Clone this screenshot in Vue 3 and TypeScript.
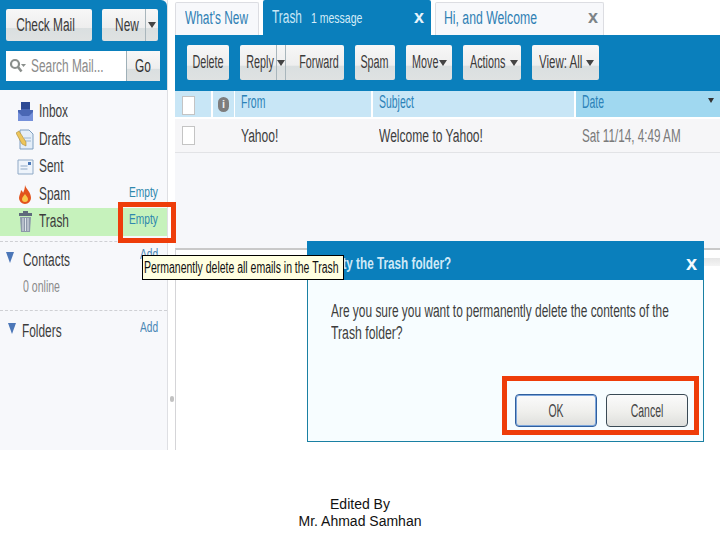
<script setup lang="ts">
interface Folder { name: string; action?: string; icon: string; active?: boolean }
const folders: Folder[] = [
  { name: 'Inbox', icon: 'inbox' },
  { name: 'Drafts', icon: 'drafts' },
  { name: 'Sent', icon: 'sent' },
  { name: 'Spam', icon: 'spam', action: 'Empty' },
  { name: 'Trash', icon: 'trash', action: 'Empty', active: true },
]
</script>

<template>
  <div class="page">
    <div class="shot">
      <aside class="side">
        <div class="side-top">
          <div class="row-btns">
            <div class="btn check"><span class="n c">Check Mail</span></div>
            <div class="btn new">
              <div class="new-l"><span class="n c">New</span></div>
              <div class="new-r"><i class="caret"></i></div>
            </div>
          </div>
          <div class="search">
            <svg class="glass" width="18" height="16" viewBox="0 0 18 16">
              <circle cx="6" cy="6" r="4" fill="none" stroke="#8a8f8c" stroke-width="2.2" />
              <path d="M9 9l3.500 4.500" stroke="#8a8f8c" stroke-width="2.6" />
              <path d="M12 6h5l-2.500 3z" fill="#8a8f8c" />
            </svg>
            <div class="search-text"><span class="n grey">Search Mail...</span></div>
            <div class="go"><span class="n c">Go</span></div>
          </div>
        </div>
        <nav class="nav">
          <div v-for="f in folders" :key="f.name" class="folder" :class="{ active: f.active }">
            <svg class="ficon" width="18" height="22" viewBox="0 0 18 22">
              <template v-if="f.icon === 'inbox'">
                <path d="M5 1h9v8h3v11H2V9h3z" fill="#4a67b4" />
                <path d="M5 1h9v7H5z" fill="#2d4a94" />
                <path d="M2 11l4 4h7l4-4v9H2z" fill="#7590da" />
              </template>
              <template v-else-if="f.icon === 'drafts'">
                <path d="M4 2h9l4 4v15H4z" fill="#e4eef8" stroke="#7f9fc0" />
                <path d="M8 10h7M9 13h6" stroke="#9db6d0" />
                <path d="M0 5l3-2 7 11 0 4-4-2z" fill="#eec65a" stroke="#a88a3a" stroke-width=".6" />
              </template>
              <template v-else-if="f.icon === 'sent'">
                <path d="M2 4h15v14H2z" fill="#eef4fb" stroke="#8fa9c6" />
                <path d="M12 6h3v3h-3z" fill="#4a78b8" />
                <path d="M4.500 10h7M4.500 13h7" stroke="#8fa9c6" />
              </template>
              <template v-else-if="f.icon === 'spam'">
                <path d="M9 2c1 4 6 7 6 13a6 6 0 0 1-12 0c0-3 2-5 2-8 1 1 2 2 2 3 1-2 2-5 2-8z" fill="#e2531c" />
                <path d="M9 11c1 2 3 3 3 5a3 3 0 0 1-6 0c0-2 2-3 3-5z" fill="#f8c64a" />
              </template>
              <template v-else>
                <path d="M7 0h5v2h4v3H3V2h4z" fill="#5f6a7c" />
                <path d="M4 6h11l-1 15H5z" fill="#8d99aa" />
                <path d="M7 7v13M9.500 7v13M12 7v13" stroke="#dfe4ea" />
              </template>
            </svg>
            <span class="n label">{{ f.name }}</span>
            <span v-if="f.action" class="n link">{{ f.action }}</span>
          </div>
        </nav>
        <section class="sec contacts">
          <div class="sec-head">
            <i class="tri"></i>
            <span class="n label">Contacts</span>
            <span class="n link add">Add</span>
          </div>
          <div class="online"><span class="n grey">0 online</span></div>
        </section>
        <section class="sec folders">
          <div class="sec-head">
            <i class="tri"></i>
            <span class="n label">Folders</span>
            <span class="n link add">Add</span>
          </div>
        </section>
      </aside>

      <div class="split"><i class="grip"></i></div>

      <main class="main">
        <div class="tabs">
          <div class="tab new-tab"><span class="n tab-t">What's New</span></div>
          <div class="tab on">
            <span class="n tab-t">Trash</span>
            <span class="n tab-s">1 message</span>
            <span class="x">x</span>
          </div>
          <div class="tab hi">
            <span class="n tab-t">Hi, and Welcome</span>
            <span class="x grey-x">x</span>
          </div>
        </div>
        <div class="toolbar">
          <div class="btn tb w-del"><span class="n c">Delete</span></div>
          <div class="btn tb w-reply">
            <div class="p-reply"><span class="n c">Reply</span></div>
            <div class="p-car"><i class="caret"></i></div>
            <div class="p-fwd"><span class="n c">Forward</span></div>
          </div>
          <div class="btn tb w-spam"><span class="n c">Spam</span></div>
          <div class="btn tb w-move"><span class="n c">Move</span><i class="caret abs"></i></div>
          <div class="btn tb w-act"><span class="n c">Actions</span><i class="caret abs"></i></div>
          <div class="btn tb w-view"><span class="n c">View: All</span><i class="caret abs"></i></div>
        </div>
        <div class="thead">
          <div class="th"><i class="cb head-cb"></i></div>
          <div class="th info-cell"><i class="info">i</i></div>
          <div class="th"><span class="n th-t">From</span></div>
          <div class="th"><span class="n th-t">Subject</span></div>
          <div class="th date-h"><span class="n th-t">Date</span><i class="caret small"></i></div>
        </div>
        <div class="trow">
          <div class="td"><i class="cb"></i></div>
          <div class="td"></div>
          <div class="td"><span class="n dark">Yahoo!</span></div>
          <div class="td"><span class="n dark">Welcome to Yahoo!</span></div>
          <div class="td"><span class="n greyd">Sat 11/14, 4:49 AM</span></div>
        </div>
        <div class="list-fill"></div>
        <div class="preview"><div class="preview-band"></div></div>
      </main>

      <div class="dialog">
        <div class="dlg-head">
          <span class="n dlg-title">Empty the Trash folder?</span>
          <span class="x">x</span>
        </div>
        <div class="dlg-body">
          <p class="dlg-line"><span class="n dark first">Are you sure you want to permanently delete the contents of the</span></p>
          <p class="dlg-line"><span class="n dark">Trash folder?</span></p>
        </div>
        <div class="dlg-actions">
          <div class="dbtn ok"><span class="n c">OK</span></div>
          <div class="dbtn"><span class="n c">Cancel</span></div>
        </div>
      </div>

      <div class="tooltip"><span class="n tip">Permanently delete all emails in the Trash</span></div>
      <div class="mark mark-empty"></div>
      <div class="mark mark-ok"></div>
    </div>
    <footer class="foot">
      <div>Edited By</div>
      <div>Mr. Ahmad Samhan</div>
    </footer>
  </div>
</template>

<style>
html, body { margin: 0; background: #fff; }
</style>

<style scoped>
.page { width: 720px; height: 540px; overflow: hidden; background: #fff; font-family: "Liberation Sans", Arial, sans-serif; color: #333; display: flex; flex-direction: column; }
.shot { position: relative; height: 450px; display: flex; flex: none; overflow: hidden; }

.n { display: inline-block; white-space: nowrap; font-size: 18px; line-height: 20px; transform: scaleX(.66); transform-origin: left center; flex: none; }
.n.c { transform-origin: center; }
.grey { color: #8b8b8b; }

.side { width: 167px; flex: none; background: #f7f8fb; border-right: 1px solid #dedfe3; display: flex; flex-direction: column; }
.side-top { height: 90px; box-sizing: border-box; background: #0a7fbc; padding: 9px 7px 9px 6px; border-top-right-radius: 6px; display: flex; flex-direction: column; gap: 10px; }
.row-btns { display: flex; gap: 10px; height: 32px; }
.btn { background: linear-gradient(#f7f7f7, #eeeeee 58%, #dadfe0 60%, #dfe2e2); border-radius: 2px; display: flex; align-items: center; justify-content: center; color: #3a3a3a; box-sizing: border-box; position: relative; }
.check { width: 86px; padding-right: 6px; }
.new { width: 56px; justify-content: flex-start; }
.new-l { width: 43px; display: flex; justify-content: center; padding-left: 7px; box-sizing: border-box; }
.new-r { width: 13px; height: 100%; border-left: 1px solid #a9b6bc; box-sizing: border-box; display: flex; align-items: center; justify-content: center; }
.caret { display: block; width: 0; height: 0; border-left: 4px solid transparent; border-right: 4px solid transparent; border-top: 6px solid #444; }
.caret.abs { position: absolute; right: 5px; top: 15px; }
.caret.small { position: absolute; right: 6px; top: 7px; border-width: 5px 3px 0; border-top-color: #333; }
.search { height: 30px; background: #fff; display: flex; align-items: center; }
.glass { margin-left: 3px; flex: none; }
.search-text { width: 99px; padding-left: 4px; box-sizing: border-box; flex: none; }
.go { flex: 1; height: 100%; display: flex; align-items: center; justify-content: center; border-left: 1px solid #9fb0b8; background: linear-gradient(#f7f7f7, #eeeeee 58%, #dadfe0 60%, #dfe2e2); color: #333; }

.nav { padding-top: 8px; }
.folder { height: 27.5px; display: flex; align-items: center; position: relative; padding-left: 16px; }
.folder.active { background: #c6f2bc; }
.folder .label { margin-top: -1px; }
.ficon { flex: none; margin-right: 5px; }
.label { color: #3c3c3c; }
.link { font-size: 15px; color: #2f88ad; position: absolute; left: 129px; top: 1px; transform: scaleX(.68); }
.sec { box-sizing: border-box; }
.contacts { margin-top: 5px; border-top: 1px dashed #cfd0d4; border-bottom: 1px dashed #cfd0d4; padding: 8px 0 0 6px; position: relative; height: 70px; }
.sec-head { display: flex; align-items: center; height: 20px; position: relative; }
.tri { display: block; width: 0; height: 0; border-left: 4px solid transparent; border-right: 4px solid transparent; border-top: 11px solid #4c77b8; margin-right: 9px; flex: none; margin-top: -4px; }
.add { left: 134px; top: -6px; color: #4a87b5; }
.online { padding: 7px 0 0 17px; }
.online .n { font-size: 16px; }
.folders { padding: 10px 0 0 8px; }
.folders .tri { margin-right: 6px; }
.folders .add { left: 132px; top: -4px; }

.split { width: 7px; flex: none; position: relative; }
.grip { position: absolute; left: 2px; top: 396px; width: 4px; height: 6px; border-radius: 2px; background: #c2c2c2; }

.main { flex: 1; min-width: 0; display: flex; flex-direction: column; }
.tabs { height: 35px; box-sizing: border-box; padding-top: 2px; display: flex; gap: 4px; }
.tab { background: #f7f8fb; border: 1px solid #dcdde2; border-bottom: 0; box-sizing: border-box; border-radius: 2px 2px 0 0; display: flex; align-items: center; padding-left: 9px; position: relative; }
.tab .n { margin-top: -2px; }
.new-tab { width: 84px; }
.tab-t { color: #2f80b4; font-size: 18px; }
.tab.on { width: 168px; margin-top: -2px; background: #0a7fbc; border: 0; padding-left: 9px; }
.on .tab-t { color: #c9e7f6; }
.tab-s { color: #d5ecf8; font-size: 15px; position: absolute; left: 48px; top: 10px; transform: scaleX(.7); }
.hi { width: 169px; padding-left: 8px; }
.hi .tab-t { transform: scaleX(.68); }
.x { position: absolute; right: 7px; top: 8px; font-size: 18px; font-weight: 700; line-height: 18px; color: #e6f4fb; }
.grey-x { color: #7d8488; right: 5px; top: 5px; }
.toolbar { height: 56px; background: #0a7fbc; box-sizing: border-box; padding: 10px 0 0 12px; display: flex; gap: 11px; }
.tb { height: 35px; }
.tb .n { transform: scaleX(.6); margin-top: -2px; }
.w-del { width: 42px; }
.w-reply { width: 104px; justify-content: flex-start; }
.p-reply { width: 36px; display: flex; justify-content: center; padding-left: 5px; box-sizing: border-box; }
.p-car { width: 12px; height: 100%; box-sizing: border-box; border-left: 1px solid #a9b6bc; border-right: 1px solid #a9b6bc; display: flex; align-items: center; justify-content: center; }
.p-fwd { flex: 1; display: flex; justify-content: center; padding-right: 2px; box-sizing: border-box; }
.w-spam { width: 40px; }
.w-move { width: 46px; justify-content: flex-start; padding-left: 6px; }
.w-act { width: 58px; justify-content: flex-start; padding-left: 7px; }
.w-view { width: 67px; justify-content: flex-start; padding-left: 7px; }
.w-move .n, .w-act .n, .w-view .n { transform-origin: left center; }
.w-view .n { transform: scaleX(.64); }
.w-act .caret.abs { right: 3px; }

.thead, .trow { display: grid; grid-template-columns: 36px 20px 136px 201px 1fr; column-gap: 2px; flex: none; }
.thead { height: 26px; }
.th { background: #c8e6f6; display: flex; align-items: center; position: relative; padding-left: 6px; box-sizing: border-box; }
.th-t { color: #2b82b8; transform: scaleX(.58); margin-top: -4px; }
.info-cell { padding-left: 5px; margin-right: -1px; }
.date-h { background: #a0d8f0; }
.cb { display: block; width: 11px; height: 17px; margin-left: 1px; background: #fff; border: 1px solid #c4c4c4; box-sizing: content-box; }
.head-cb { margin-top: 2px; }
.info { display: block; width: 11px; height: 15px; border-radius: 6px; background: #7d7d7d; color: #eee; font: 700 11px/15px "Liberation Sans", sans-serif; text-align: center; }
.trow { height: 34px; margin-top: 2px; background: #f6f6f8; border-bottom: 1px solid #e2e3e6; box-sizing: border-box; }
.td { display: flex; align-items: center; padding-left: 6px; box-sizing: border-box; }
.dark { color: #3d3d3d; transform: scaleX(.67); }
.greyd { color: #7a7a7a; transform: scaleX(.65); }
.list-fill { height: 95px; background: #f6f7fa; flex: none; }
.preview { flex: 1; background: #fff; border-top: 2px solid #c9c9c9; border-left: 1px solid #d5d5d8; padding-top: 8px; box-sizing: border-box; }
.preview-band { height: 8px; background: linear-gradient(#e6e6e6, #f4f4f4); }

.dialog { position: absolute; left: 307px; top: 241px; width: 397px; height: 201px; box-sizing: border-box; border: 1px solid #1a80a3; background: #f7fdff; display: flex; flex-direction: column; }
.dlg-head { height: 39px; background: #0a7fbc; position: relative; flex: none; display: flex; align-items: center; padding: 6px 0 0 10px; box-sizing: border-box; margin: -1px -1px 0; }
.dlg-title { color: #cfe9f7; font-weight: 700; font-size: 17px; transform: scaleX(.69); }
.dlg-head .x { right: 7px; top: 13px; color: #f3fbff; font-size: 20px; }
.dlg-body { padding: 21px 0 0 23px; height: 114px; box-sizing: border-box; flex: none; }
.dlg-line { margin: 0; height: 22px; line-height: 22px; }
.dlg-line .n { transform: scaleX(.68); }
.dlg-line .first { transform: scaleX(.662); }
.dlg-actions { display: flex; justify-content: flex-end; gap: 9px; padding-right: 15px; }
.dbtn { width: 82px; height: 33px; box-sizing: border-box; border: 1px solid #3a4a55; border-radius: 4px; background: linear-gradient(#fbfbfb, #efefec 55%, #dedfdc); display: flex; align-items: center; justify-content: center; color: #444; }
.dbtn .n { transform: scaleX(.58); }
.ok { border-color: #2f5f9e; box-shadow: inset 0 0 0 1px #7ea7dc; }

.tooltip { position: absolute; left: 142px; top: 255px; width: 202px; height: 25px; box-sizing: border-box; border: 1px solid #000; background: #ffffe1; display: flex; align-items: center; padding-left: 1px; }
.tip { color: #111; font-size: 16px; transform: scaleX(.655); }
.mark { position: absolute; border: 5px solid #ee3d0a; box-sizing: border-box; }
.mark-empty { left: 118px; top: 202px; width: 58px; height: 41px; }
.mark-ok { left: 502px; top: 376px; width: 197px; height: 59px; }

.foot { flex: 1; padding-top: 46px; text-align: center; font-size: 14px; line-height: 17px; color: #111; box-sizing: border-box; }
</style>
